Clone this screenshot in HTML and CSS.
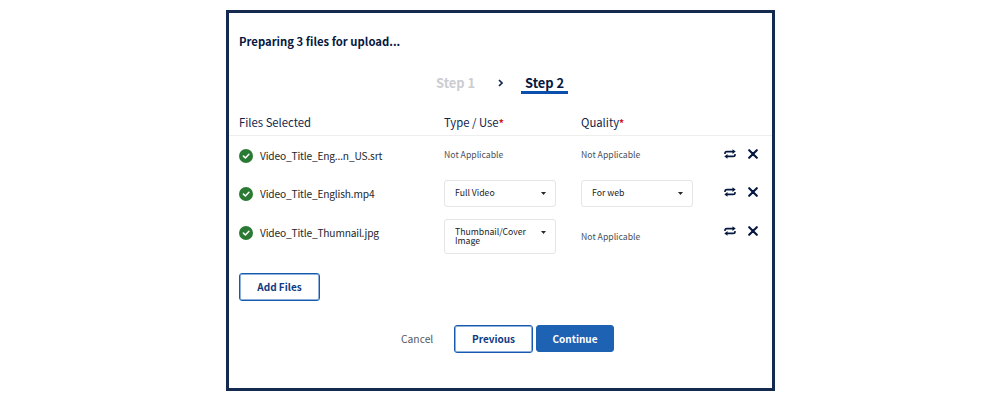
FILE: index.html
```html
<!DOCTYPE html>
<html lang="en">
<head>
<meta charset="utf-8">
<title>Upload files</title>
<link rel="stylesheet" href="styles.css">
</head>
<body>
<svg class="defs" width="0" height="0" aria-hidden="true">
  <symbol id="check" viewBox="0 0 14 14"><circle cx="7" cy="7" r="7" fill="#2b7a33"/><path d="M4.4 7.1 6.4 8.9 9.9 5.3" fill="none" stroke="#fff" stroke-width="1.5" stroke-linecap="round" stroke-linejoin="round"/></symbol>
  <symbol id="swap" viewBox="0 0 12 10"><path d="M1 5.1V4.3Q1 2.6 2.8 2.6H9M11 4.9V5.7Q11 7.4 9.2 7.4H3" fill="none" stroke="#06183f" stroke-width="1.6"/><path d="M8.5.3 11.7 2.6 8.5 4.9ZM3.5 5.1.3 7.4 3.5 9.7Z" fill="#06183f"/></symbol>
  <symbol id="cross" viewBox="0 0 10 10"><path d="M1.2 1.2 8.8 8.8M8.8 1.2 1.2 8.8" fill="none" stroke="#06183f" stroke-width="2.1" stroke-linecap="round"/></symbol>
</svg>
<main class="dialog">
  <h1 class="title">Preparing 3 files for upload...</h1>
  <nav class="steps">
    <span class="step">Step 1</span>
    <svg class="chevron" viewBox="0 0 5 8"><path d="M1 1 4 4 1 7" fill="none" stroke="#10264d" stroke-width="1.6"/></svg>
    <span class="step step-active">Step 2</span>
  </nav>
  <div class="row head">
    <span>Files Selected</span><span>Type / Use<b class="req">*</b></span><span>Quality<b class="req">*</b></span>
  </div>
  <div class="row file">
    <div class="name"><svg class="check"><use href="#check"/></svg><span class="label">Video_Title_Eng...n_US.srt</span></div>
    <span class="na">Not Applicable</span>
    <span class="na">Not Applicable</span>
    <div class="actions"><svg class="swap"><use href="#swap"/></svg><svg class="cross"><use href="#cross"/></svg></div>
  </div>
  <div class="row file">
    <div class="name"><svg class="check"><use href="#check"/></svg><span class="label">Video_Title_English.mp4</span></div>
    <div class="select"><span>Full Video</span><i class="caret"></i></div>
    <div class="select"><span>For web</span><i class="caret"></i></div>
    <div class="actions"><svg class="swap"><use href="#swap"/></svg><svg class="cross"><use href="#cross"/></svg></div>
  </div>
  <div class="row file file-tall">
    <div class="name"><svg class="check"><use href="#check"/></svg><span class="label">Video_Title_Thumnail.jpg</span></div>
    <div class="select select-tall"><span>Thumbnail/Cover<br>Image</span><i class="caret"></i></div>
    <span class="na na-low">Not Applicable</span>
    <div class="actions"><svg class="swap"><use href="#swap"/></svg><svg class="cross"><use href="#cross"/></svg></div>
  </div>
  <button class="btn add">Add Files</button>
  <footer class="footer">
    <span class="cancel">Cancel</span>
    <button class="btn previous">Previous</button>
    <button class="btn continue">Continue</button>
  </footer>
</main>
</body>
</html>
```
FILE: styles.css
```css
* { box-sizing: border-box; }
body { margin: 0; background: #fff; font-family: "Noto Sans CJK SC", "Noto Sans", sans-serif; color: #10264d; }
.defs { position: absolute; }
svg { display: block; flex: none; }
.dialog { width: 549px; height: 381px; margin: 10px 0 0 226px; border: 3px solid #142a4f; display: flex; flex-direction: column; align-items: flex-start; white-space: nowrap; }
.title { margin: 18px 0 0 10px; font-size: 11.3px; line-height: 20px; font-weight: 700; color: #06183f; }
.steps { display: flex; align-items: flex-start; margin: 21px 0 0 203px; height: 44px; }
.step { width: 48px; padding: 0 4px; font-size: 12.9px; line-height: 21px; height: 22px; font-weight: 700; color: #cbcdd1; }
.step-active { width: 47px; margin-left: 18px; color: #06183f; border-bottom: 3px solid #0b4fae; }
.chevron { width: 5px; height: 8px; margin: 7px 0 0 18px; }
.row { display: grid; grid-template-columns: 205px 137px 142px 1fr; width: 100%; padding-left: 10px; }
.head { height: 20px; border-bottom: 1px solid #eee; font-size: 11.3px; line-height: 12px; }
.req { color: #d3101c; font-size: 10px; }
.file { height: 38px; align-items: start; }
.file + .file { height: 39px; }
.file + .file-tall { height: 60px; }
.name { display: flex; align-items: center; height: 40px; color: #24272c; font-size: 10.2px; letter-spacing: -0.17px; }
.label { padding-bottom: 2px; }
.check { width: 14px; height: 14px; margin-right: 7px; }
.na { font-size: 8.7px; line-height: 38px; color: #4b505c; }
.na-low { line-height: 48px; }
.select { display: flex; justify-content: space-between; width: 112px; height: 27px; margin-top: 6px; padding: 7px 9px 0 10px; border: 1px solid #e4e5e7; border-radius: 3px; color: #202227; font-size: 8.7px; line-height: 10px; }
.select-tall { height: 35px; line-height: 9px; }
.caret { width: 5px; height: 3px; margin-top: 4px; background: #24272c; clip-path: polygon(0 0, 100% 0, 50% 100%); }
.actions { display: flex; align-items: center; height: 36px; padding-left: 1px; gap: 12px; }
.swap { width: 12px; height: 10px; }
.cross { width: 10px; height: 10px; }
.btn { height: 28px; padding: 0; border: 1px solid #1759ae; border-radius: 3px; box-shadow: inset 0 0 0 1px #8bb0dc; background: #fff; color: #103a82; font-family: inherit; font-size: 10px; font-weight: 700; line-height: 26px; }
.add { width: 81px; margin-left: 10px; }
.footer { display: flex; align-items: flex-start; margin: 24px 0 0 172px; }
.cancel { width: 53px; font-size: 10.3px; line-height: 28px; color: #555a65; }
.previous { width: 79px; margin-right: 3px; }
.continue { width: 78px; height: 27px; background: #1e62b3; border-color: #1e62b3; box-shadow: none; color: #fff; }
```
